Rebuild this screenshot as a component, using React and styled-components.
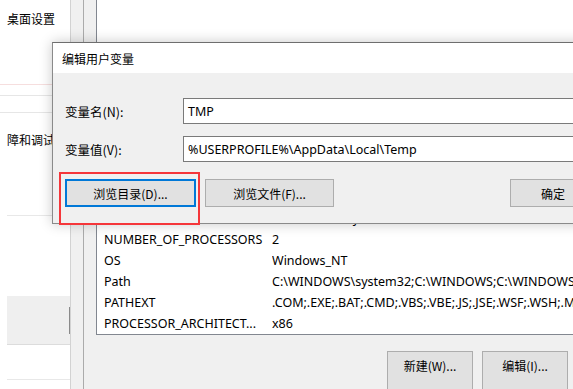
import React from "react";
import styled, { createGlobalStyle, css } from "styled-components";

const Global = createGlobalStyle`
  html, body { margin: 0; padding: 0; background: #fff; }
  * { box-sizing: border-box; }
`;

const Desktop = styled.div`
  position: relative;
  width: 573px;
  height: 389px;
  overflow: hidden;
  background: #fff;
  font-family: "Noto Sans", "Noto Sans CJK SC", sans-serif;
  font-size: 12.5px;
  color: #000;
`;

/* ---------- left background window ---------- */
const SideWindow = styled.div`
  position: absolute;
  left: 0;
  top: 0;
  width: 70px;
  height: 389px;
  background: #fff;
  display: flex;
  flex-direction: column;
`;

const SideHeading = styled.div`
  height: ${(p) => p.$h}px;
  margin-top: ${(p) => p.$mt || 0}px;
  padding-left: 7px;
  display: flex;
  align-items: center;
  font-size: 12px;
  white-space: nowrap;
  font-family: "Noto Sans CJK SC", sans-serif;
`;

const SideLine = styled.div`
  height: 1px;
  margin-top: ${(p) => p.$mt}px;
  margin-left: ${(p) => p.$ml || 0}px;
  background: ${(p) => p.$c};
`;

const SidePanel = styled.div`
  margin-top: ${(p) => p.$mt}px;
  margin-left: 7px;
  height: 49px;
  background: #efefef;
  border-bottom: 1px solid #dcdcdc;
  display: flex;
  justify-content: flex-end;
  align-items: center;
`;

const SideEdge = styled.div`
  width: 1px;
  height: 27px;
  background: #8a8a8a;
`;

/* ---------- environment variables dialog (behind) ---------- */
const EnvDialog = styled.div`
  position: absolute;
  left: 70px;
  top: 0;
  width: 620px;
  height: 389px;
  background: #f0f0f0;
  border-left: 1px solid #d2d2d2;
  padding-left: 12px;
  display: flex;
`;

const GroupBox = styled.div`
  flex: 1;
  border-left: 1px solid #ababab;
  padding-left: 12px;
  display: flex;
  flex-direction: column;
`;

const VarList = styled.div`
  height: 338px;
  background: #fff;
  border-left: 1px solid #828790;
  border-bottom: 1px solid #828790;
  padding-top: 208px;
  display: flex;
  flex-direction: column;
`;

const VarRow = styled.div`
  display: grid;
  grid-template-columns: 168px 1fr;
  height: 21px;
  align-items: center;
  padding-left: 7px;
  white-space: nowrap;
  overflow: hidden;
`;

const Cell = styled.span`
  overflow: hidden;
  white-space: nowrap;
`;

const EnvButtonBar = styled.div`
  display: flex;
  gap: 9px;
  margin-top: 16px;
  margin-left: 291px;
`;

const buttonBase = css`
  background: #e1e1e1;
  border: 1px solid #adadad;
  font-family: "Noto Sans CJK SC", "Noto Sans", sans-serif;
  font-size: 12px;
  color: #000;
  display: flex;
  justify-content: center;
  white-space: nowrap;
  padding: 0;
`;

const EnvButton = styled.div`
  ${buttonBase};
  width: 86px;
  height: 40px;
  align-items: flex-start;
  padding-top: 5px;
  flex-shrink: 0;
`;

/* ---------- edit user variable dialog (front) ---------- */
const EditDialog = styled.div`
  position: absolute;
  left: 52px;
  top: 42px;
  width: 580px;
  height: 182px;
  border: 1px solid #8a8a8a;
  border-top-color: #6e6e6e;
  box-shadow: 0 0 12px rgba(0, 0, 0, 0.22);
  display: flex;
  flex-direction: column;
  background: #f0f0f0;
`;

const TitleBar = styled.div`
  height: 30px;
  background: #fff;
  padding-left: 9px;
  display: flex;
  align-items: center;
  font-family: "Noto Sans CJK SC", sans-serif;
  font-size: 12px;
  flex-shrink: 0;
`;

const DialogBody = styled.div`
  flex: 1;
  padding: 25px 0 0 12px;
  display: flex;
  flex-direction: column;
  gap: 12px;
`;

const FieldRow = styled.div`
  display: flex;
  align-items: center;
  height: 26px;
`;

const FieldLabel = styled.label`
  width: 118px;
  flex-shrink: 0;
  font-family: "Noto Sans CJK SC", "Noto Sans", sans-serif;
  font-size: 12.5px;
`;

const FieldInput = styled.div`
  width: 420px;
  height: 26px;
  background: #fff;
  border: 1px solid #7a7a7a;
  padding-left: 4px;
  display: flex;
  align-items: center;
  white-space: nowrap;
  overflow: hidden;
  flex-shrink: 0;
`;

const DialogButtons = styled.div`
  display: flex;
  align-items: center;
  margin-top: 5px;
`;

const DialogButton = styled.div`
  ${buttonBase};
  align-items: center;
  height: 28px;
  width: ${(p) => p.$w}px;
  margin-left: ${(p) => p.$ml || 0}px;
  flex-shrink: 0;
  ${(p) =>
    p.$focused &&
    css`
      border-color: #0078d7;
      box-shadow: inset 0 0 0 1px #0078d7;
    `}
`;

/* ---------- annotation ---------- */
const Highlight = styled.div`
  position: absolute;
  left: 59px;
  top: 172px;
  width: 141px;
  height: 53px;
  border: 2px solid #f5363a;
  pointer-events: none;
`;

const rows = [
  ["DriverData", "C:\\Windows\\System32\\Drivers\\DriverData"],
  ["NUMBER_OF_PROCESSORS", "2"],
  ["OS", "Windows_NT"],
  ["Path", "C:\\WINDOWS\\system32;C:\\WINDOWS;C:\\WINDOWS\\System32\\Wbem"],
  ["PATHEXT", ".COM;.EXE;.BAT;.CMD;.VBS;.VBE;.JS;.JSE;.WSF;.WSH;.MSC"],
  ["PROCESSOR_ARCHITECT...", "x86"],
];

export default function App() {
  return (
    <>
      <Global />
      <Desktop>
        <SideWindow>
          <SideHeading $h={36}>桌面设置</SideHeading>
          <SideLine $mt={48} $c="#f6dede" />
          <SideLine $mt={10} $c="#e6e6e6" />
          <SideLine $mt={16} $c="#e6e6e6" />
          <SideHeading $h={24} $mt={14}>障和调试</SideHeading>
          <SideLine $mt={64} $ml={7} $c="#e8e8e8" />
          <SidePanel $mt={80}>
            <SideEdge />
          </SidePanel>
          <SideLine $mt={34} $ml={7} $c="#e8e8e8" />
        </SideWindow>

        <EnvDialog>
          <GroupBox>
            <VarList>
              {rows.map(([name, value]) => (
                <VarRow key={name}>
                  <Cell>{name}</Cell>
                  <Cell>{value}</Cell>
                </VarRow>
              ))}
            </VarList>
            <EnvButtonBar>
              <EnvButton>新建(W)...</EnvButton>
              <EnvButton>编辑(I)...</EnvButton>
            </EnvButtonBar>
          </GroupBox>
        </EnvDialog>

        <EditDialog>
          <TitleBar>编辑用户变量</TitleBar>
          <DialogBody>
            <FieldRow>
              <FieldLabel>变量名(N):</FieldLabel>
              <FieldInput>TMP</FieldInput>
            </FieldRow>
            <FieldRow>
              <FieldLabel>变量值(V):</FieldLabel>
              <FieldInput>%USERPROFILE%\AppData\Local\Temp</FieldInput>
            </FieldRow>
            <DialogButtons>
              <DialogButton $w={131} $focused>
                浏览目录(D)...
              </DialogButton>
              <DialogButton $w={129} $ml={9}>
                浏览文件(F)...
              </DialogButton>
              <DialogButton $w={86} $ml={176}>
                确定
              </DialogButton>
            </DialogButtons>
          </DialogBody>
        </EditDialog>

        <Highlight />
      </Desktop>
    </>
  );
}
